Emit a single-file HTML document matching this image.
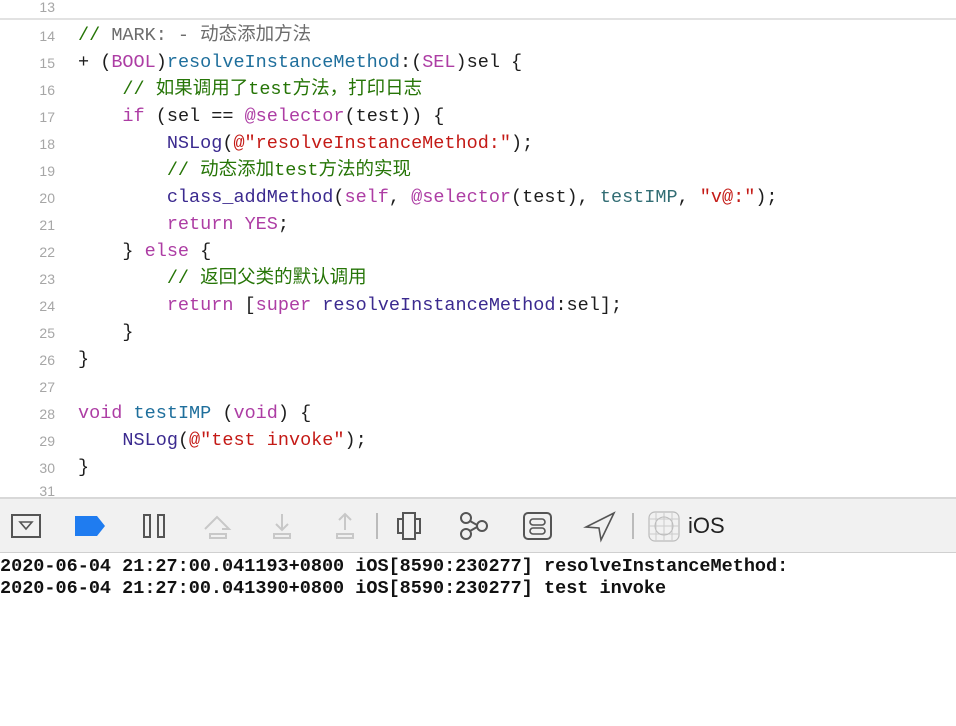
<!DOCTYPE html>
<html><head><meta charset="utf-8"><style>
body{margin:0;width:956px;height:726px;background:#fff;position:relative;overflow:hidden;font-family:"Liberation Mono","Noto Sans CJK SC",monospace;}
.ln{position:absolute;left:0;width:55px;text-align:right;font:14px "Liberation Sans",sans-serif;color:#a6a6a6;margin-top:2px}
.c{position:absolute;left:78px;font-size:18.5px;white-space:pre;color:#1d1d1d;line-height:20px;margin-top:2px}
.cm{color:#267507}.g{color:#6c6c6c}.k{color:#ad3da4}.b{color:#1f6f9c}.p{color:#3b2a8f}.s{color:#c41a16}.t{color:#326d74}
.tb{position:absolute;left:0;top:497px;width:956px;height:56px;background:#f1f1f1;border-top:2px solid #d8d8d8;border-bottom:1px solid #d0d0d0;box-sizing:border-box;}
.con{position:absolute;left:0;font-size:18.5px;font-weight:bold;white-space:pre;color:#111;line-height:20px;margin-top:1px}
</style></head><body>
<div style="position:absolute;left:0;top:18px;width:956px;height:2px;background:#e2e2e2"></div>
<div class="ln" style="top:-3px">13</div>
<div class="ln" style="top:26px">14</div><div class="c" style="top:24px"><span class="cm">//</span><span class="g"> MARK: - 动态添加方法</span></div>
<div class="ln" style="top:53px">15</div><div class="c" style="top:51px">+ (<span class="k">BOOL</span>)<span class="b">resolveInstanceMethod</span>:(<span class="k">SEL</span>)sel {</div>
<div class="ln" style="top:80px">16</div><div class="c" style="top:78px"><span class="cm">    // 如果调用了test方法，打印日志</span></div>
<div class="ln" style="top:107px">17</div><div class="c" style="top:105px">    <span class="k">if</span> (sel == <span class="k">@selector</span>(test)) {</div>
<div class="ln" style="top:134px">18</div><div class="c" style="top:132px">        <span class="p">NSLog</span>(<span class="s">@"resolveInstanceMethod:"</span>);</div>
<div class="ln" style="top:161px">19</div><div class="c" style="top:159px"><span class="cm">        // 动态添加test方法的实现</span></div>
<div class="ln" style="top:188px">20</div><div class="c" style="top:186px">        <span class="p">class_addMethod</span>(<span class="k">self</span>, <span class="k">@selector</span>(test), <span class="t">testIMP</span>, <span class="s">"v@:"</span>);</div>
<div class="ln" style="top:215px">21</div><div class="c" style="top:213px">        <span class="k">return</span> <span class="k">YES</span>;</div>
<div class="ln" style="top:242px">22</div><div class="c" style="top:240px">    } <span class="k">else</span> {</div>
<div class="ln" style="top:269px">23</div><div class="c" style="top:267px"><span class="cm">        // 返回父类的默认调用</span></div>
<div class="ln" style="top:296px">24</div><div class="c" style="top:294px">        <span class="k">return</span> [<span class="k">super</span> <span class="p">resolveInstanceMethod</span>:sel];</div>
<div class="ln" style="top:323px">25</div><div class="c" style="top:321px">    }</div>
<div class="ln" style="top:350px">26</div><div class="c" style="top:348px">}</div>
<div class="ln" style="top:377px">27</div>
<div class="ln" style="top:404px">28</div><div class="c" style="top:402px"><span class="k">void</span> <span class="b">testIMP</span> (<span class="k">void</span>) {</div>
<div class="ln" style="top:431px">29</div><div class="c" style="top:429px">    <span class="p">NSLog</span>(<span class="s">@"test invoke"</span>);</div>
<div class="ln" style="top:458px">30</div><div class="c" style="top:456px">}</div>
<div class="ln" style="top:481px">31</div>
<div class="tb">
<svg width="956" height="54" style="position:absolute;left:0;top:0" fill="none" stroke-width="2">
 <rect x="12" y="16" width="28" height="22" stroke="#555"/><path d="M20 23 L32 23 L26 30 Z" stroke="#555" stroke-width="1.6"/>
 <path d="M75 17 H97 L105 27 L97 37 H75 Z" fill="#1f7cf0" stroke="none"/>
 <rect x="144" y="16" width="6" height="22" stroke="#555"/><rect x="158" y="16" width="6" height="22" stroke="#555"/>
 <path d="M205 30 L217 18 L229 30 H222" stroke="#c8c8c8"/><rect x="210" y="35" width="16" height="4" stroke="#c8c8c8"/>
 <path d="M282 15 V31 M276 25 L282 31 L288 25" stroke="#c8c8c8"/><rect x="274" y="35" width="16" height="4" stroke="#c8c8c8"/>
 <path d="M345 31 V15 M339 21 L345 15 L351 21" stroke="#c8c8c8"/><rect x="337" y="35" width="16" height="4" stroke="#c8c8c8"/>
 <path d="M377 14 V40" stroke="#bbb"/>
 <rect x="403" y="14" width="12" height="26" stroke="#555"/><rect x="398" y="20" width="5" height="14" stroke="#555"/><rect x="415" y="20" width="5" height="14" stroke="#555"/>
 <circle cx="466" cy="19" r="5" stroke="#555"/><circle cx="466" cy="35" r="5" stroke="#555"/><circle cx="482" cy="27" r="5" stroke="#555"/><path d="M470 22 L477 26 M470 32 L477 28" stroke="#555"/>
 <rect x="524" y="14" width="27" height="26" rx="4" stroke="#555"/><rect x="530" y="20" width="15" height="6" rx="3" stroke="#555" stroke-width="1.6"/><rect x="530" y="29" width="15" height="6" rx="3" stroke="#555" stroke-width="1.6"/>
 <path d="M614 14 L586 28 L599 29 L601 41 Z" stroke="#555" stroke-width="1.6"/>
 <path d="M633 14 V40" stroke="#bbb"/>
 <rect x="649" y="13" width="30" height="29" rx="6" stroke="#bbb" stroke-width="1.2"/>
 <path d="M649 20H679M649 27H679M649 35H679M656 13V42M664 13V42M672 13V42" stroke="#ccc" stroke-width="1"/><circle cx="664" cy="27" r="9" stroke="#bbb" stroke-width="1"/>
</svg>
<div style="position:absolute;left:688px;top:14px;font:22px 'Liberation Sans',sans-serif;color:#222">iOS</div>
</div>
<div class="con" style="top:556px">2020-06-04 21:27:00.041193+0800 iOS[8590:230277] resolveInstanceMethod:</div>
<div class="con" style="top:578px">2020-06-04 21:27:00.041390+0800 iOS[8590:230277] test invoke</div>
</body></html>
